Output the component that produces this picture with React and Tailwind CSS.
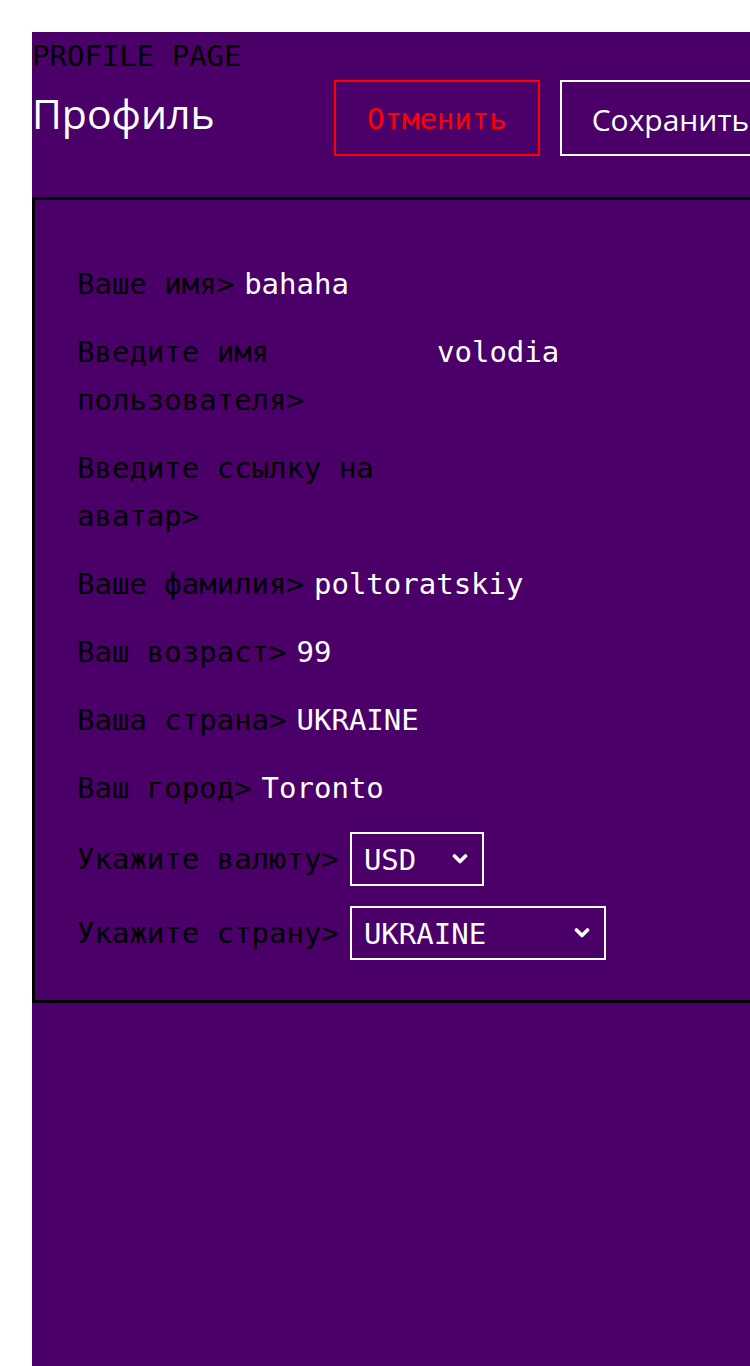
import React from "react";

const mono = "font-['DejaVu_Sans_Mono',monospace]";

function Chevron() {
  return (
    <svg width="16" height="12" viewBox="0 0 16 12" className="shrink-0">
      <polyline points="2.5,3 8,8.5 13.5,3" fill="none" stroke="white" strokeWidth="3.6" strokeLinecap="round" strokeLinejoin="round" />
    </svg>
  );
}

function Row({ label, value }) {
  return (
    <div className="flex items-start gap-[10px]">
      <span className="max-w-[350px] text-black text-[29px] leading-[48px]">{label}</span>
      {value ? <span className="text-white text-[29px] leading-[48px]">{value}</span> : null}
    </div>
  );
}

function SelectRow({ label, value, width }) {
  return (
    <div className="flex items-center gap-[11px]">
      <span className="text-black text-[29px] leading-[48px]">{label}</span>
      <div className={`flex items-center justify-between border-2 border-white h-[54px] pl-[12px] pr-[14px] ${width}`}>
        <span className="text-white text-[29px] leading-none pt-[2px]">{value}</span>
        <Chevron />
      </div>
    </div>
  );
}

export default function App() {
  return (
    <div className={`w-full h-screen overflow-hidden bg-white ${mono}`}>
      <div className="ml-8 mt-8 w-[800px] h-[1400px] bg-[#4a0068]">
        <div className="text-black text-[29px] leading-[48px] h-[48px]">PROFILE PAGE</div>
        <div className="flex items-start">
          <h1 className="font-['Open_Sans',sans-serif] text-white text-[41px] leading-[66px] w-[302px]">Профиль</h1>
          <div className="flex gap-5">
            <button className="h-[76px] border-2 border-[#ff0000] px-[31px] pt-[3px] text-[#ff0000] text-[29px]">Отменить</button>
            <button className="h-[76px] border-2 border-white px-[30px] pt-[2px] text-white text-[30px] font-['Open_Sans',sans-serif]">Сохранить</button>
          </div>
        </div>
        <div className="mt-[41px] border-[3px] border-black pl-[42px] pt-[60px] pb-[40px] flex flex-col gap-5">
          <Row label="Ваше имя>" value="bahaha" />
          <Row label="Введите имя пользователя>" value="volodia" />
          <Row label="Введите ссылку на аватар>" value="" />
          <Row label="Ваше фамилия>" value="poltoratskiy" />
          <Row label="Ваш возраст>" value="99" />
          <Row label="Ваша страна>" value="UKRAINE" />
          <Row label="Ваш город>" value="Toronto" />
          <SelectRow label="Укажите валюту>" value="USD" width="w-[134px]" />
          <SelectRow label="Укажите страну>" value="UKRAINE" width="w-[256px]" />
        </div>
      </div>
    </div>
  );
}
